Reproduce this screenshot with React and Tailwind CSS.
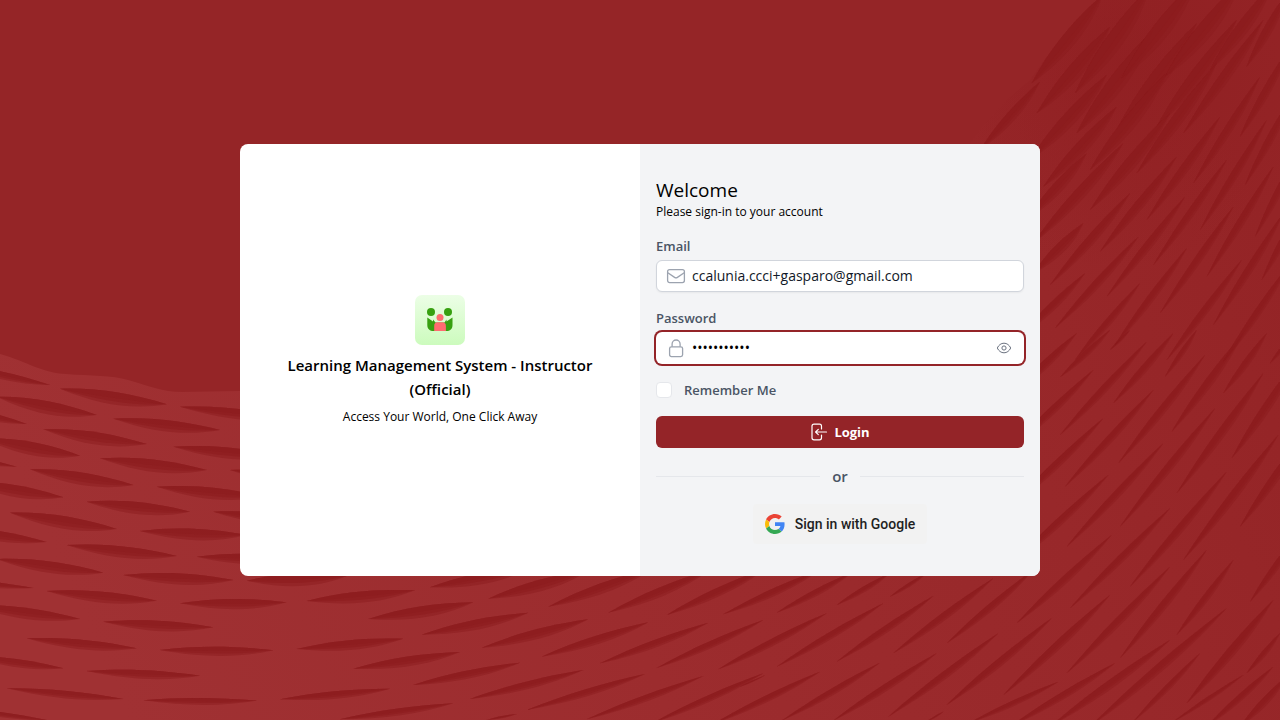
import React from "react";

const FONT = 'font-["Open_Sans","Noto_Sans",sans-serif]';

// Each fold of the woven backdrop: [left tip x, y, right tip x, y, thickness]
const LEFT_FOLDS = [
  [-150, 70, 150, 135, 28], [180, 146, 500, 193, 46], [540, 200, 880, 235, 38], [-10, 170, 290, 225, 48],
  [340, 236, 660, 270, 42], [130, 268, 440, 312, 46], [520, 320, 850, 350, 40], [-190, 190, 80, 252, 30],
  [-50, 295, 240, 347, 48], [300, 355, 620, 390, 46], [690, 390, 960, 420, 34], [90, 388, 400, 435, 46],
  [-220, 330, 50, 380, 24], [470, 440, 790, 470, 42], [-100, 425, 190, 472, 44], [260, 485, 570, 515, 44],
  [640, 515, 940, 545, 38], [30, 518, 350, 567, 46], [420, 573, 740, 585, 42], [-170, 560, 140, 606, 38],
  [200, 615, 530, 648, 42], [590, 650, 900, 655, 38], [-10, 657, 310, 698, 42], [370, 705, 700, 720, 42],
  [-190, 715, 100, 744, 22], [140, 753, 470, 782, 40], [540, 790, 860, 787, 38], [-90, 795, 240, 837, 40],
  [310, 845, 640, 862, 38], [80, 895, 410, 925, 36], [480, 930, 820, 931, 34], [-90, 948, 190, 985, 30],
  [260, 993, 600, 1007, 32], [20, 1045, 370, 1077, 28], [430, 1081, 770, 1082, 26], [-160, 1100, 150, 1142, 18],
];

const BOTTOM_FOLDS = [
  [20, 32, 320, 18, 46], [200, 93, 525, 61, 42], [385, 147, 700, 97, 42],
  [170, 237, 490, 206, 36], [340, 296, 660, 246, 36], [120, 388, 450, 356, 28],
  [300, 448, 640, 400, 26], [570, 52, 880, -10, 42], [745, 86, 1050, 0, 42], [545, 194, 865, 128, 38],
  [725, 233, 1045, 148, 36], [520, 345, 840, 278, 30], [690, 387, 1030, 300, 28], [860, 420, 1215, 312, 26],
  [740, 450, 830, 432, 8], [925, 110, 1240, -5, 38], [1105, 128, 1410, 0, 34], [1280, 135, 1580, -5, 32],
  [905, 260, 1225, 157, 32], [1080, 280, 1405, 158, 28], [1250, 294, 1570, 150, 26], [1040, 448, 1390, 318, 24],
  [1240, 458, 1570, 310, 24], [1450, 133, 1740, 0, 28], [1435, 298, 1760, 130, 26], [1420, 462, 1740, 305, 24],
];

const CORNER_FOLDS = [
  [110, 128, 340, 5, 24], [290, 105, 450, 10, 20], [450, 80, 560, 10, 14], [110, 290, 430, 100, 26],
  [290, 275, 580, 78, 26], [460, 250, 760, 25, 28], [620, 220, 880, 0, 26], [0, 350, 75, 316, 6],
  [125, 452, 420, 278, 24], [280, 452, 590, 250, 26], [445, 440, 775, 190, 28], [620, 405, 935, 145, 28],
  [790, 375, 1110, 75, 30], [980, 310, 1290, -10, 30], [1140, 265, 1400, -60, 30], [1310, 195, 1480, -30, 26],
  [560, 455, 610, 425, 6], [690, 458, 955, 335, 20], [810, 470, 1125, 280, 26], [930, 470, 1290, 210, 32],
  [1050, 470, 1460, 115, 32], [1180, 455, 1380, 250, 22], [1340, 400, 1600, 90, 34], [1300, 455, 1510, 315, 16],
  [1400, 470, 1600, 290, 24], [1500, 470, 1640, 320, 28], [1520, 310, 1620, 190, 20],
];

const RIGHT_FOLDS = [
  [-60, 170, 140, -20, 30], [90, 112, 240, -30, 22], [240, 30, 300, -30, 10], [-60, 330, 190, 90, 28],
  [90, 285, 350, 5, 28], [250, 190, 430, -20, 28], [405, 110, 500, -30, 20], [-60, 505, 220, 235, 28],
  [105, 440, 370, 150, 28], [265, 370, 525, 45, 30], [425, 275, 640, -20, 32], [580, 160, 710, -20, 26],
  [720, 70, 800, -30, 16], [-60, 680, 235, 405, 28], [110, 620, 400, 310, 28], [270, 560, 555, 205, 30],
  [440, 460, 700, 100, 32], [605, 355, 800, 60, 32], [-40, 850, 245, 585, 28], [120, 805, 420, 505, 28],
  [300, 740, 590, 395, 30], [460, 660, 745, 285, 32], [630, 560, 830, 270, 32],
  [660, 785, 820, 560, 26],
];

const UPPER_FOLDS = [
  [95, 250, 310, -20, 54], [110, 340, 330, 80, 54], [-60, 450, 120, 245, 36], [225, 280, 450, -40, 62],
  [90, 480, 320, 225, 50], [230, 400, 460, 90, 60], [365, 235, 590, -60, 62], [130, 560, 350, 320, 46],
  [350, 390, 590, 70, 58], [495, 230, 720, -50, 60], [80, 660, 260, 460, 40], [270, 510, 500, 220, 50],
  [470, 380, 710, 60, 50], [630, 210, 820, -50, 46], [100, 730, 370, 430, 42], [270, 630, 510, 340, 44],
  [410, 520, 650, 190, 42], [550, 400, 790, 60, 38], [740, 200, 860, -20, 34], [100, 820, 250, 670, 38],
  [300, 755, 530, 470, 34], [440, 660, 660, 350, 32], [580, 550, 780, 230, 30], [720, 410, 870, 140, 30],
  [150, 855, 390, 580, 34], [60, 1010, 255, 820, 30], [320, 890, 555, 590, 30], [460, 795, 680, 480, 28],
  [600, 690, 800, 360, 28], [735, 555, 880, 280, 28], [165, 985, 415, 710, 30], [345, 1035, 560, 745, 28],
  [480, 940, 700, 620, 28], [620, 830, 820, 500, 28], [765, 710, 900, 440, 26],
  [500, 1080, 725, 780, 28], [640, 975, 850, 640, 28], [785, 840, 910, 600, 26],
  [225, 1080, 420, 850, 26], [670, 1085, 870, 790, 26],
];

function foldPath([x1, y1, x2, y2, t], depth) {
  const dx = x2 - x1;
  const dy = y2 - y1;
  const len = Math.hypot(dx, dy);
  const nx = -dy / len;
  const ny = dx / len;
  const at = (k, o) => `${(x1 + dx * k + nx * o).toFixed(1)} ${(y1 + dy * k + ny * o).toFixed(1)}`;
  return `M${x1} ${y1}C${at(0.35, -t * 0.42)} ${at(0.65, -t * 0.38)} ${x2} ${y2}C${at(0.7, t * depth)} ${at(0.38, t * depth)} ${x1} ${y1}Z`;
}

function Folds({ items, x, y }) {
  return (
    <g transform={`translate(${x} ${y}) scale(0.33333)`} fill="#8c1b1e">
      {items.map((f, i) => (
        <g key={i}>
          <path d={foldPath(f, 0.68)} opacity="0.5" />
          <path d={foldPath(f, 0.4)} opacity="0.55" />
          <path d={foldPath(f, 0.1)} opacity="0.5" />
        </g>
      ))}
    </g>
  );
}

function Backdrop() {
  return (
    <svg aria-hidden="true" className="absolute inset-0 h-full w-full" viewBox="0 0 1280 720" preserveAspectRatio="xMidYMid slice">
      <defs>
        <linearGradient id="weave" x1="0" y1="0.6" x2="1" y2="0.35">
          <stop offset="0" stopColor="#a03133" />
          <stop offset="0.4" stopColor="#9c2c2e" />
          <stop offset="0.75" stopColor="#98282a" />
          <stop offset="1" stopColor="#942426" />
        </linearGradient>
        <radialGradient id="shade" gradientUnits="userSpaceOnUse" cx="1120" cy="60" r="210">
          <stop offset="0" stopColor="#8c1b1e" stopOpacity="0.5" />
          <stop offset="1" stopColor="#8c1b1e" stopOpacity="0" />
        </radialGradient>
        <clipPath id="weaveEdge">
          <path d="M970 144C982 126 1000 104 1030 80C1048 55 1068 25 1097 0H1280V720H970Z" />
        </clipPath>
      </defs>
      <rect width="1280" height="720" fill="#952527" />
      <path
        d="M0 354C28 362 42 373 66 374C90 376 112 375 128 380C150 386 162 392 182 392L240 391L560 400L900 200L970 144C982 126 1000 104 1030 80C1048 55 1068 25 1097 0H1280V720H0Z"
        fill="url(#weave)"
      />
      <rect x="960" width="320" height="280" fill="url(#shade)" clipPath="url(#weaveEdge)" />
      <Folds items={LEFT_FOLDS} x={0} y={340} />
      <Folds items={BOTTOM_FOLDS} x={240} y={570} />
      <Folds items={CORNER_FOLDS} x={740} y={570} />
      <Folds items={RIGHT_FOLDS} x={1030} y={340} />
      <g clipPath="url(#weaveEdge)">
        <Folds items={UPPER_FOLDS} x={1000} y={0} />
      </g>
    </svg>
  );
}

function BrandMark() {
  return (
    <svg aria-hidden="true" className="size-[50px]" viewBox="0 0 50 50">
      <defs>
        <linearGradient id="tile" x1="0" y1="0" x2="0" y2="1">
          <stop offset="0" stopColor="#ecfee6" />
          <stop offset="1" stopColor="#ccfbbd" />
        </linearGradient>
      </defs>
      <rect width="50" height="50" rx="7" fill="url(#tile)" />
      <g fill="#37a010">
        <circle cx="16" cy="17" r="4" />
        <circle cx="33" cy="17" r="4" />
        <path d="M12.3 22.5L18 26.5V24.5L20.5 27.5H29.5L31.500 24.5V26.5L37.5 22.5V30C37.5 34 35 36 31.5 36H18.5C15 36 12.3 34 12.3 30Z" />
      </g>
      <circle cx="25" cy="22.5" r="4.3" fill="#ddfdd3" />
      <circle cx="25" cy="22.5" r="3.5" fill="#ff6b70" />
      <path d="M19.2 36V31Q19.2 27.3 22.5 27.3H27.5Q30.9 27.3 30.9 31V36Z" fill="#ff6b70" />
    </svg>
  );
}

const MailIcon = () => (
  <svg aria-hidden="true" className="size-5 shrink-0" viewBox="0 0 20 20" fill="none" stroke="#9ca3af" strokeWidth="1.3" strokeLinejoin="round">
    <rect x="1.6" y="3.6" width="16.8" height="13" rx="2" />
    <path d="M1.8 6.8L8.6 11.4Q10 12.3 11.4 11.4L18.2 6.8" />
  </svg>
);

const LockIcon = () => (
  <svg aria-hidden="true" className="size-5 shrink-0" viewBox="0 0 20 20" fill="none" stroke="#9ca3af" strokeWidth="1.3">
    <rect x="3.6" y="8.8" width="13" height="9.8" rx="1.8" />
    <path d="M6.1 8.8V6A4 4 0 0 1 14.1 6V8.8" />
  </svg>
);

const EyeIcon = () => (
  <svg aria-hidden="true" className="size-4" viewBox="0 0 16 16" fill="none" stroke="#6b7280" strokeWidth="1">
    <path d="M1.3 8C2.7 5 5.1 3.2 8 3.2S13.3 5 14.7 8C13.3 11 10.9 12.8 8 12.8S2.7 11 1.3 8Z" />
    <circle cx="8" cy="8" r="2.1" />
  </svg>
);

const LoginIcon = () => (
  <svg aria-hidden="true" className="size-[18px]" viewBox="0 0 18 18" fill="none" stroke="#ffffff" strokeWidth="1.2" strokeLinecap="round" strokeLinejoin="round">
    <path d="M11.5 6V3.2Q11.5 1.2 9.5 1.2H4Q2 1.2 2 3.2V14.8Q2 16.8 4 16.8H9.5Q11.5 16.8 11.5 14.8V12" />
    <path d="M16.5 9H5.7M8.3 6.3L5.6 9L8.3 11.7" />
  </svg>
);

const GoogleIcon = () => (
  <svg aria-hidden="true" className="size-5" viewBox="0 0 48 48">
    <path fill="#EA4335" d="M24 9.5c3.54 0 6.71 1.22 9.21 3.6l6.85-6.85C35.9 2.38 30.47 0 24 0 14.62 0 6.51 5.38 2.56 13.22l7.98 6.19C12.43 13.72 17.74 9.5 24 9.5z" />
    <path fill="#4285F4" d="M46.98 24.55c0-1.57-.15-3.09-.38-4.55H24v9.02h12.94c-.58 2.96-2.26 5.48-4.78 7.18l7.73 6c4.51-4.18 7.09-10.36 7.09-17.65z" />
    <path fill="#FBBC05" d="M10.53 28.59c-.48-1.45-.76-2.99-.76-4.59s.27-3.14.76-4.59l-7.98-6.19C.92 16.46 0 20.12 0 24c0 3.88.92 7.54 2.56 10.78l7.97-6.19z" />
    <path fill="#34A853" d="M24 48c6.48 0 11.93-2.13 15.89-5.81l-7.73-6c-2.15 1.45-4.92 2.3-8.16 2.3-6.26 0-11.57-4.22-13.47-9.91l-7.98 6.19C6.51 42.62 14.62 48 24 48z" />
  </svg>
);

export default function App() {
  return (
    <main className={`relative flex min-h-screen items-center justify-center overflow-hidden bg-[#952527] ${FONT}`}>
      <Backdrop />
      <div className="relative grid w-full max-w-[800px] grid-cols-2 overflow-hidden rounded-lg bg-white">
        <section className="flex flex-col items-center justify-center px-8 text-center text-black">
          <BrandMark />
          <h1 className="mt-2 text-[15px] leading-6 font-semibold">Learning Management System - Instructor (Official)</h1>
          <p className="mt-2 text-xs">Access Your World, One Click Away</p>
        </section>

        <form className="flex flex-col gap-4 bg-gray-100 px-4 py-8" onSubmit={(e) => e.preventDefault()}>
          <header className="text-black">
            <h2 className="text-[19px] leading-7">Welcome</h2>
            <p className="text-xs">Please sign-in to your account</p>
          </header>

          <div className="flex flex-col gap-1">
            <label htmlFor="email" className="text-[13px] leading-5 font-semibold text-gray-600">Email</label>
            <div className="flex h-8 items-center gap-1.5 rounded-md border border-gray-300 bg-white px-[9px] shadow-xs">
              <MailIcon />
              <input id="email" type="email" defaultValue="ccalunia.ccci+gasparo@gmail.com" className="min-w-0 flex-1 text-sm text-gray-900 outline-none" />
            </div>
          </div>

          <div className="flex flex-col gap-1">
            <label htmlFor="password" className="text-[13px] leading-5 font-semibold text-gray-600">Password</label>
            <div className="flex h-8 items-center gap-1.5 rounded-md bg-white pr-3 pl-2.5 ring-2 ring-[#942428]">
              <LockIcon />
              <input id="password" type="password" defaultValue="gasparo2024" className="min-w-0 flex-1 text-sm text-black outline-none" />
              <button type="button" aria-label="Show password"><EyeIcon /></button>
            </div>
          </div>

          <div className="flex h-5 items-center gap-3">
            <input id="remember" type="checkbox" className="size-4 appearance-none rounded border border-gray-200 bg-white" />
            <label htmlFor="remember" className="text-[13px] leading-5 font-semibold text-gray-600">Remember Me</label>
          </div>

          <button type="submit" className="flex h-8 items-center justify-center gap-1.5 rounded-md bg-[#942428] text-[13px] leading-5 font-bold text-white">
            <LoginIcon />
            Login
          </button>

          <div className="flex items-center gap-3 text-[15px] leading-6 font-semibold text-gray-600">
            <span className="h-px flex-1 bg-gray-200" />
            or
            <span className="h-px flex-1 bg-gray-200" />
          </div>

          <button type="button" className="flex h-10 items-center gap-2.5 self-center rounded bg-[#f2f2f2] px-3 font-[Roboto,sans-serif] text-sm font-medium text-[#1f1f1f]">
            <GoogleIcon />
            Sign in with Google
          </button>
        </form>
      </div>
    </main>
  );
}
